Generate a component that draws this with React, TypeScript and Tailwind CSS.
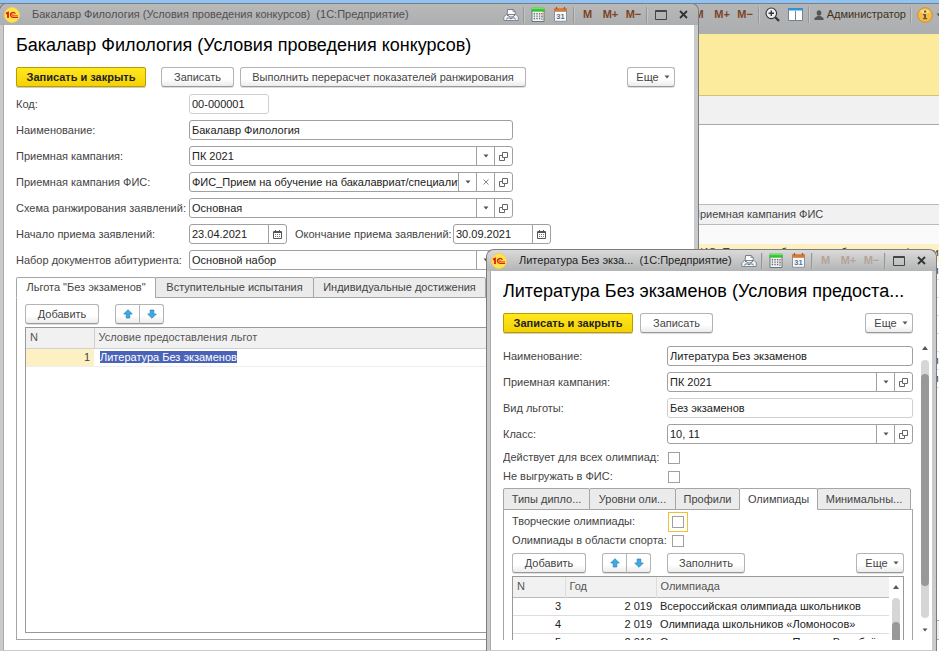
import React from 'react';

interface WindowProps {
  title: string;
  place: string;
  dim?: boolean;
  muted?: boolean;
  children: React.ReactNode;
}

const Logo = () => (
  <svg width="16" height="16" viewBox="0 0 16 16" className="shrink-0">
    <circle cx="8" cy="8" r="7.5" fill="#ffe54a" stroke="#f0d060" />
    <path d="M2 6.6 4 5.6V11" stroke="#dd1c1c" strokeWidth="1.8" fill="none" />
    <path d="M11.4 6.8A2.6 2.4 0 1 0 9 10.3H14" stroke="#dd1c1c" strokeWidth="1.3" fill="none" />
    <path d="M9.8 7.6A1 .9 0 1 0 9 8.7H14" stroke="#dd1c1c" strokeWidth=".7" fill="none" />
  </svg>
);

const Printer = () => (
  <svg width="16" height="16" viewBox="0 0 16 16">
    <path d="M4 8 4.6 2.5H10l2.2 2V8" fill="#fdfdfd" stroke="#73808c" />
    <path d="M10 2.5v2h2.2" fill="none" stroke="#73808c" strokeWidth=".8" />
    <path d="M3.5 7.5h9.5l2.3 2.3v3.7H.8V9.8z" fill="#f1f4f6" stroke="#7d8894" />
    <path d="M4 8.5h1.5l1 1.5h3.5l1-1.5h1" fill="none" stroke="#66717d" />
    <path d="M3.5 12.5c0-2 3-2 4.5-.6 1.5-1.4 4.5-1.4 4.5.6" fill="#fff" stroke="#66717d" />
  </svg>
);

const Calculator = () => (
  <svg width="14" height="15" viewBox="0 0 14 15">
    <path d="M1 2h12v12.5H1z" fill="#f3f5f5" stroke="#6b7880" />
    <path d="M.5.7h13v4H.5z" fill="#35c135" />
    <path d="M.5.7h13v1.5H.5z" fill="#77df68" />
    <path d="M3.4 6v7M6 6v7M8.6 6v7" stroke="#64717b" strokeWidth="1.4" strokeDasharray="1.4 1" />
    <path d="M11 6v3" stroke="#e13c3c" strokeWidth="1.4" strokeDasharray="1.4 1" />
    <path d="M11 9v4" stroke="#64717b" strokeWidth="1.4" strokeDasharray="1.4 1" />
  </svg>
);

const Calendar = () => (
  <svg width="15" height="15" viewBox="0 0 15 15">
    <path d="M1.5 3h12v11.3h-12z" fill="#f7f9fa" stroke="#8295a5" />
    <path d="M1 1.2h13v3.6H1z" fill="#cf7c43" />
    <path d="M3.5 0v2.5M11.5 0v2.5" stroke="#a65a2c" strokeWidth="1.3" />
    <text x="7.5" y="12.3" textAnchor="middle" fontSize="7.5" fontWeight="700" fontFamily="Liberation Sans" fill="#5e6f80">31</text>
  </svg>
);

const SmallCalendar = () => (
  <svg width="9" height="9" viewBox="0 0 9 9">
    <path d="M.5 1.5h8v7h-8z" fill="#fff" stroke="#555" />
    <path d="M1 2.5h7M2.5 0v2M6.5 0v2" stroke="#555" />
    <path d="M2 4.5h5M2 6.5h5" stroke="#777" strokeDasharray="1 1" />
  </svg>
);

const OpenIcon = () => (
  <svg width="9" height="9" viewBox="0 0 9 9" fill="none" stroke="#666">
    <path d="M3.5.5h5v5h-5z" />
    <path d="M3 3.5H.5v5h5V6" />
  </svg>
);

const Triangle = ({ up }: { up?: boolean }) => (
  <svg width="6" height="4" viewBox="0 0 6 4" className="shrink-0">
    <path d={up ? 'M0 4h6L3 0z' : 'M.5.5h5L3 3.5z'} fill="#555" />
  </svg>
);

const Arrow = ({ down }: { down?: boolean }) => (
  <svg width="10" height="10" viewBox="0 0 10 10" className={down ? 'rotate-180' : ''}>
    <path d="M5 .7 9.3 5H6.8v4H3.2V5H.7z" fill="#3fa9e0" stroke="#2382b8" strokeWidth=".7" />
  </svg>
);

const Sep = () => <span className="mx-[1px] h-4 w-[2px] shrink-0 border-l border-[#979797] bg-[#c4c4c4]" />;

const Tool = ({ label, children }: { label: string; children: React.ReactNode }) => (
  <button aria-label={label} className="flex h-5 w-[23px] shrink-0 items-center justify-center">
    {children}
  </button>
);

const Memory = ({ dim }: { dim?: boolean }) => (
  <div className={`flex text-[11px] font-bold ${dim ? 'text-[#b4a499]' : 'text-[#7b4524]'}`}>
    <Tool label="M">M</Tool>
    <Tool label="M+">M+</Tool>
    <Tool label="M-">M−</Tool>
  </div>
);

const Window = ({ title, place, dim, muted, children }: WindowProps) => (
  <section className={`absolute flex flex-col rounded-t-lg border border-b-0 border-[#7c7c7c] bg-[#c9cacb] px-1 pb-px ${place}`}>
    <header className={`-mx-1 flex h-[21px] shrink-0 items-center rounded-t-lg bg-linear-to-b pr-[3px] pl-1 ${muted ? 'from-[#b9b9ba] to-[#adaeb0]' : 'from-[#dadada] to-[#b3b4b5]'}`}>
      <Logo />
      <h2 className={`ml-3 min-w-0 flex-1 overflow-hidden whitespace-pre text-[11px] ${muted ? 'text-[#505050]' : 'text-[#222]'}`}>{title}</h2>
      <Tool label="Печать"><Printer /></Tool>
      <Sep />
      <Tool label="Калькулятор"><Calculator /></Tool>
      <Tool label="Календарь"><Calendar /></Tool>
      <Sep />
      <Memory dim={dim} />
      <Sep />
      <Tool label="Развернуть">
        <svg width="12" height="10" viewBox="0 0 12 10"><path d="M.5.5h11v9H.5zM1 1.5h10" fill="none" stroke="#444" /></svg>
      </Tool>
      <Tool label="Закрыть">
        <svg width="9" height="9" viewBox="0 0 9 9"><path d="m1 1 7 7M8 1 1 8" stroke="#333" strokeWidth="1.8" /></svg>
      </Tool>
    </header>
    <div className="-ml-px flex min-h-0 flex-1 flex-col border-l border-[#aaa] bg-white pb-[10px]">{children}</div>
  </section>
);

const Button = ({ className = '', children }: { className?: string; children: React.ReactNode }) => (
  <button className={`flex h-5 shrink-0 items-center justify-center rounded-[3px] border border-[#b4b4b4] border-b-[#999] bg-linear-to-b from-white from-60% to-[#ececec] text-[#444] shadow-[0_1px_0_#ddd] ${className}`}>
    {children}
  </button>
);

const Primary = () => (
  <button className="h-5 w-[130px] shrink-0 rounded-[2px] border border-[#b89d00] bg-linear-to-b from-[#ffe71e] to-[#f5d200] font-bold text-[#222] shadow-[0_1px_0_#ccc]">
    Записать и закрыть
  </button>
);

const More = () => (
  <Button className="ml-auto w-12 gap-[5px] pl-1">
    Еще <Triangle />
  </Button>
);

const Arrows = () => (
  <div className="flex">
    <Button className="w-[25px] rounded-r-none"><Arrow /></Button>
    <Button className="-ml-px w-[25px] rounded-l-none"><Arrow down /></Button>
  </div>
);

interface FieldProps {
  id: string;
  label: string;
  value: string;
  labelClass: string;
  boxClass: string;
  light?: boolean;
  actions?: string[];
}

const Box = ({ id, value, boxClass, light, actions = [] }: Omit<FieldProps, 'label' | 'labelClass'>) => (
  <div className={`flex h-5 shrink-0 rounded-[3px] border bg-white ${light ? 'border-[#cfcfcf]' : 'border-[#a0a0a0]'} ${boxClass}`}>
    <input id={id} defaultValue={value} className="min-w-0 flex-1 rounded-[3px] pl-[2px] text-[#222] outline-none" />
    {actions.map((a) => (
      <button key={a} aria-label={a} className="flex w-[18px] shrink-0 items-center justify-center border-l border-[#a0a0a0]">
        {a === 'list' && <Triangle />}
        {a === 'clear' && <svg width="6" height="6" viewBox="0 0 6 6"><path d="m.5.5 5 5m0-5-5 5" stroke="#888" /></svg>}
        {a === 'open' && <OpenIcon />}
        {a === 'date' && <SmallCalendar />}
      </button>
    ))}
  </div>
);

const Field = ({ label, labelClass, ...box }: FieldProps) => (
  <div className="flex items-center">
    <label htmlFor={box.id} className={`shrink-0 whitespace-nowrap ${labelClass}`}>{label}</label>
    <Box {...box} />
  </div>
);

const Check = ({ id, label, labelClass, focused }: { id: string; label: string; labelClass: string; focused?: boolean }) => (
  <div className="flex h-[19px] items-center">
    <label htmlFor={id} className={`shrink-0 whitespace-nowrap ${labelClass}`}>{label}</label>
    <input
      id={id}
      type="checkbox"
      className={`ml-px size-3 appearance-none border border-[#a0a0a0] bg-white ${focused ? 'outline-1 outline-offset-3 outline-[#f0c030]' : ''}`}
    />
  </div>
);

const Tab = ({ active, className, children }: { active?: boolean; className: string; children: React.ReactNode }) => (
  <button
    role="tab"
    aria-selected={!!active}
    className={`-mr-px shrink-0 whitespace-nowrap rounded-t-[2px] border border-[#a6a6a6] ${active ? 'border-b-white bg-white' : 'bg-[#ebebeb]'} ${className}`}
  >
    {children}
  </button>
);

const mainFields = [
  { id: 'name', label: 'Наименование:', value: 'Бакалавр Филология', actions: [] },
  { id: 'campaign', label: 'Приемная кампания:', value: 'ПК 2021', actions: ['list', 'open'] },
  { id: 'fis', label: 'Приемная кампания ФИС:', value: 'ФИС_Прием на обучение на бакалавриат/специалит', actions: ['list', 'clear', 'open'] },
  { id: 'scheme', label: 'Схема ранжирования заявлений:', value: 'Основная', actions: ['list', 'open'] },
];

const benefitFields = [
  { id: 'b-name', label: 'Наименование:', value: 'Литература Без экзаменов', actions: [] },
  { id: 'b-campaign', label: 'Приемная кампания:', value: 'ПК 2021', actions: ['list', 'open'] },
  { id: 'b-kind', label: 'Вид льготы:', value: 'Без экзаменов', light: true, actions: [] },
  { id: 'b-class', label: 'Класс:', value: '10, 11', actions: ['list', 'open'] },
];

const olympiads = [
  [3, '2 019', 'Всероссийская олимпиада школьников'],
  [4, '2 019', 'Олимпиада школьников «Ломоносов»'],
  [5, '2 019', 'Олимпиада школьников «Покори Воробьёвы горы!»'],
];

const fisName = 'ФИС_Прием на обучение на бакалавриат/специалитет';
const campaigns = [fisName, '', '', '', '', fisName, fisName];

const Desktop = () => (
  <main className="flex h-full flex-col">
    <div className="h-[3px] shrink-0 bg-[#8fc3f3]" />
    <div className="flex h-[31px] shrink-0 items-start justify-end border-t border-[#7f7f7f] bg-linear-to-b from-[#b4b5b7] to-[#adaeb0]">
      <div className="flex h-[21px] items-center">
        <Memory />
        <Sep />
        <Tool label="Масштаб">
          <svg width="15" height="15" viewBox="0 0 15 15" fill="none" stroke="#333">
            <circle cx="6.3" cy="6.3" r="5.3" fill="#eee" strokeWidth="1.1" />
            <path d="M6.3 3.6V9M3.6 6.3H9" strokeWidth="1.4" />
            <path d="m10.3 10.3 3.7 3.7" strokeWidth="2.2" />
          </svg>
        </Tool>
        <Tool label="Панели">
          <svg width="15" height="13" viewBox="0 0 15 13">
            <path d="M.5.5h14v12H.5z" fill="#fff" stroke="#74828e" />
            <path d="M0 0h15v2.5H0z" fill="#2d94d8" />
            <path d="M7.5 3v9" stroke="#74828e" />
          </svg>
        </Tool>
        <Sep />
        <button className="flex items-center gap-[3px] pr-[3px] pl-[3px] text-[#3f3218]">
          <svg width="10" height="10" viewBox="0 0 10 10" fill="#555">
            <ellipse cx="5" cy="3" rx="2.3" ry="2.8" />
            <path d="M.5 10V8L3.5 6h3L9.5 8v2z" />
          </svg>
          Администратор
        </button>
        <Sep />
        <Tool label="О программе">
          <svg width="16" height="16" viewBox="0 0 16 16">
            <circle cx="8" cy="8" r="7.3" fill="#f5bd48" stroke="#d48f20" />
            <path d="M3 5a6 6 0 0 1 10 0q-5 3-10 0" fill="#fbdc92" />
            <path d="M7 3.5h2.2v2H7zM6 7h3v4h1.2v1.2H6V11h1V8.2H6z" fill="#665a40" />
          </svg>
        </Tool>
        <span className="w-[3px] overflow-hidden"><Triangle /></span>
      </div>
    </div>
    <div className="h-[62px] shrink-0 border-b border-[#d3c577] bg-[#fceb9d]" />
    <div className="h-[29px] shrink-0 border-b border-[#aaa] bg-[#f1f1f1]" />
    <div className="h-[79px] shrink-0" />
    <table className="w-full table-fixed">
      <thead>
        <tr className="h-5 border-y border-[#bbb] bg-[#f1f1f1] text-left">
          <th className="w-[692px]" />
          <th className="font-normal">Приемная кампания ФИС</th>
        </tr>
      </thead>
      <tbody>
        <tr className="h-[19px] bg-[#fafafa]"><td /><td /></tr>
        <tr className="h-[18px] bg-[#fdf0c2]"><td /><td className="overflow-hidden whitespace-nowrap">{fisName}</td></tr>
        {campaigns.map((name, i) => (
          <tr key={i} className="h-[18px] border-b border-[#ddd]"><td /><td className="overflow-hidden whitespace-nowrap">{name}</td></tr>
        ))}
      </tbody>
    </table>
    <div className="mt-auto mb-[11px] h-5 shrink-0 border-y border-[#aaa] bg-[#eee]" />
  </main>
);

const CompetitionWindow = () => (
  <Window
    title="Бакалавр Филология (Условия проведения конкурсов)  (1С:Предприятие)"
    place="top-[3px] right-[240px] bottom-0 -left-px"
    muted
  >
    <div className="flex min-h-0 flex-1 flex-col pt-2 pr-[19px] pl-3">
      <h1 className="mb-[10px] overflow-hidden whitespace-nowrap text-[18px] leading-6 text-black">Бакалавр Филология (Условия проведения конкурсов)</h1>
      <div className="mb-[7px] flex">
        <Primary />
        <Button className="ml-[15px] w-[73px]">Записать</Button>
        <Button className="ml-[6px] w-[286px]">Выполнить перерасчет показателей ранжирования</Button>
        <More />
      </div>
      <div className="flex flex-col gap-[6px]">
        <Field id="code" label="Код:" value="00-000001" labelClass="w-[173px]" boxClass="w-20" light />
        {mainFields.map((f) => (
          <Field key={f.id} {...f} labelClass="w-[173px]" boxClass="w-[324px]" />
        ))}
        <div className="flex">
          <Field id="from" label="Начало приема заявлений:" value="23.04.2021" labelClass="w-[173px]" boxClass="w-[98px]" actions={['date']} />
          <Field id="to" label="Окончание приема заявлений:" value="30.09.2021" labelClass="ml-2 w-[158px]" boxClass="w-[98px]" actions={['date']} />
        </div>
        <Field id="docs" label="Набор документов абитуриента:" value="Основной набор" labelClass="w-[173px]" boxClass="w-[324px]" actions={['list', 'open']} />
      </div>
      <div role="tablist" className="relative mt-[7px] -mb-px flex h-[21px] shrink-0">
        <Tab active className="w-[140px]">Льгота "Без экзаменов"</Tab>
        <Tab className="w-[159px]">Вступительные испытания</Tab>
        <Tab className="w-[173px]">Индивидуальные достижения</Tab>
      </div>
      <div className="flex min-h-0 flex-1 flex-col border border-[#a6a6a6] px-2 pt-[6px] pb-[6px]">
        <div className="mb-[3px] flex gap-4">
          <Button className="w-[74px]">Добавить</Button>
          <Arrows />
        </div>
        <div className="min-h-0 flex-1 border border-[#999]">
          <table className="w-full table-fixed">
            <thead>
              <tr className="h-5 border-b border-[#d0d0d0] bg-[#f1f1f1] text-left text-[#555]">
                <th className="w-[68px] border-r border-[#d0d0d0] pl-1 font-normal">N</th>
                <th className="pl-1 font-normal">Условие предоставления льгот</th>
              </tr>
            </thead>
            <tbody>
              <tr className="h-[18px] border-b border-[#eee]">
                <td className="bg-[#fdf0c2] pr-1 text-right">1</td>
                <td className="pl-[6px]"><span className="bg-[#4a63b8] text-white">Литература Без экзаменов</span></td>
              </tr>
            </tbody>
          </table>
        </div>
      </div>
    </div>
  </Window>
);

const BenefitWindow = () => (
  <Window
    title="Литература Без экза...  (1С:Предприятие)"
    place="top-[249px] right-[2px] bottom-0 left-[486px]"
    dim
  >
    <div className="shrink-0 pt-2 pr-[19px] pl-3">
      <h1 className="mb-[10px] overflow-hidden whitespace-nowrap text-[18px] leading-6 text-black">Литература Без экзаменов (Условия предоста...</h1>
      <div className="mb-[13px] flex">
        <Primary />
        <Button className="ml-[7px] w-[73px]">Записать</Button>
        <More />
      </div>
    </div>
    <div className="flex min-h-0 flex-1 pl-3">
      <div className="min-w-0 flex-1 overflow-hidden">
        <div className="flex flex-col gap-[6px]">
          {benefitFields.map((f) => (
            <Field key={f.id} {...f} labelClass="w-[164px]" boxClass="flex-1" />
          ))}
        </div>
        <div className="mt-1">
          <Check id="all" label="Действует для всех олимпиад:" labelClass="w-[164px]" />
          <Check id="skip" label="Не выгружать в ФИС:" labelClass="w-[164px]" />
        </div>
        <div role="tablist" className="relative mt-[2px] -mb-px flex h-[22px]">
          <Tab className="w-[87px]">Типы дипло...</Tab>
          <Tab className="w-[87px]">Уровни оли...</Tab>
          <Tab className="w-[65px]">Профили</Tab>
          <Tab active className="w-[79px]">Олимпиады</Tab>
          <Tab className="w-[94px]">Минимальны...</Tab>
        </div>
        <div className="border border-b-0 border-[#a6a6a6] px-2 pt-[2px]">
          <Check id="art" label="Творческие олимпиады:" labelClass="w-[159px]" focused />
          <Check id="sport" label="Олимпиады в области спорта:" labelClass="w-[159px]" />
          <div className="mt-[3px] mb-[3px] flex gap-4">
            <Button className="w-[74px]">Добавить</Button>
            <Arrows />
            <Button className="w-[78px]">Заполнить</Button>
            <More />
          </div>
          <div className="flex border border-b-0 border-[#999]">
            <table className="min-w-0 flex-1 table-fixed">
              <thead>
                <tr className="h-5 border-b border-[#bbb] bg-[#f1f1f1] text-left text-[#555]">
                  <th className="w-[52px] border-r border-[#ddd] pl-1 font-normal">N</th>
                  <th className="w-[91px] border-r border-[#ddd] pl-1 font-normal">Год</th>
                  <th className="pl-1 font-normal">Олимпиада</th>
                </tr>
              </thead>
              <tbody>
                {olympiads.map(([n, year, name]) => (
                  <tr key={n} className="h-[18px] border-b border-[#ddd] text-[#222]">
                    <td className="pr-1 text-right">{n}</td>
                    <td className="pr-1 text-right">{year}</td>
                    <td className="max-w-0 overflow-hidden whitespace-nowrap pl-1">{name}</td>
                  </tr>
                ))}
              </tbody>
            </table>
            <div className="flex w-[14px] flex-col items-center pt-2">
              <Triangle up />
              <div className="mt-[9px] w-2 flex-1 rounded-t-full bg-[#d6d6d6] pt-6">
                <div className="h-full rounded-t-full bg-[#999]" />
              </div>
            </div>
          </div>
        </div>
      </div>
      <div className="flex w-[19px] shrink-0 flex-col items-center pl-[5px]">
        <Triangle up />
        <div className="my-[10px] w-2 flex-1 rounded-full bg-[#d6d6d6] pt-[14px] pb-8">
          <div className="h-full rounded-full bg-[#999]" />
        </div>
        <span className="mb-2 flex"><Triangle /></span>
      </div>
    </div>
  </Window>
);

export default function App() {
  return (
    <div className="relative h-screen overflow-hidden bg-white font-['Liberation_Sans',Arial,sans-serif] text-[11px] leading-[13px] text-[#444]">
      <Desktop />
      <CompetitionWindow />
      <BenefitWindow />
    </div>
  );
}
